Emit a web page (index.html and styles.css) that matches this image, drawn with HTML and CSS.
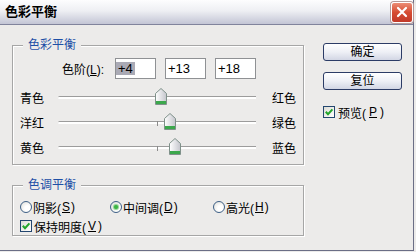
FILE: index.html
```
<!DOCTYPE html>
<html lang="zh-CN">
<head>
<meta charset="utf-8">
<title>色彩平衡</title>
<link rel="stylesheet" href="styles.css">
</head>
<body>
<div class="window">
  <div class="titlebar">
    <span class="title">色彩平衡</span>
    <button class="close" aria-label="关闭"><svg width="12" height="12" viewBox="0 0 12 12"><path d="M2 2L10 10M10 2L2 10" stroke="#fff" stroke-width="2.2" stroke-linecap="round"/></svg></button>
  </div>
  <div class="body">
    <div class="main">
      <fieldset class="group group-balance">
        <legend>色彩平衡</legend>
        <div class="levels">
          <span class="levels-label">色阶(<u>L</u>):</span>
          <div class="field"><span class="val sel">+4</span></div>
          <div class="field"><span class="val">+13</span></div>
          <div class="field"><span class="val">+18</span></div>
        </div>
        <div class="slider-row">
          <span class="s-left">青色</span>
          <div class="track"><span class="tick"></span><span class="thumb" style="left:52%"><svg width="12" height="17" viewBox="0 0 12 17"><defs><linearGradient id="tg" x1="0" x2="1"><stop offset="0" stop-color="#ffffff"/><stop offset="1" stop-color="#c4c5cc"/></linearGradient></defs><path d="M6 0.5L11.5 5.5V16.5H0.5V5.5Z" fill="url(#tg)" stroke="#7f918a"/><rect x="1" y="13" width="10" height="3" fill="#3ca84c"/></svg></span></div>
          <span class="s-right">红色</span>
        </div>
        <div class="slider-row">
          <span class="s-left">洋红</span>
          <div class="track"><span class="tick"></span><span class="thumb" style="left:56.5%"><svg width="12" height="17" viewBox="0 0 12 17"><path d="M6 0.5L11.5 5.5V16.5H0.5V5.5Z" fill="url(#tg)" stroke="#7f918a"/><rect x="1" y="13" width="10" height="3" fill="#3ca84c"/></svg></span></div>
          <span class="s-right">绿色</span>
        </div>
        <div class="slider-row">
          <span class="s-left">黄色</span>
          <div class="track"><span class="tick"></span><span class="thumb" style="left:59%"><svg width="12" height="17" viewBox="0 0 12 17"><path d="M6 0.5L11.5 5.5V16.5H0.5V5.5Z" fill="url(#tg)" stroke="#7f918a"/><rect x="1" y="13" width="10" height="3" fill="#3ca84c"/></svg></span></div>
          <span class="s-right">蓝色</span>
        </div>
      </fieldset>
      <fieldset class="group group-tone">
        <legend>色调平衡</legend>
        <div class="radios">
          <label class="radio-item w1"><span class="radio"></span>阴影(<u>S</u>)</label>
          <label class="radio-item w2"><span class="radio on"></span>中间调(<u>D</u>)</label>
          <label class="radio-item"><span class="radio"></span>高光(<u>H</u>)</label>
        </div>
        <label class="check check-tone"><span class="box"><svg width="10" height="10" viewBox="0 0 10 10"><path d="M1.8 4.8L4 7.2L8.4 2.4" fill="none" stroke="#22a52a" stroke-width="2"/></svg></span>保持明度(<u>V</u>)</label>
      </fieldset>
    </div>
    <div class="side">
      <button class="btn">确定</button>
      <button class="btn">复位</button>
      <label class="check check-preview"><span class="box"><svg width="10" height="10" viewBox="0 0 10 10"><path d="M1.8 4.8L4 7.2L8.4 2.4" fill="none" stroke="#22a52a" stroke-width="2"/></svg></span>预览(<u>P</u>)</label>
    </div>
  </div>
</div>
</body>
</html>
```
FILE: styles.css
```
html, body {
  margin: 0;
  background: #ecebea;
}
body {
  font-family: "Liberation Sans", "Noto Sans CJK SC", sans-serif;
  font-size: 12px;
  color: #000;
}
.window {
  width: 414px;
  height: 251px;
  box-sizing: border-box;
  border-right: 1px solid #6b6e86;
  border-bottom: 1px solid #6b6e86;
  background: #ecebea;
}
.titlebar {
  height: 25px;
  box-sizing: border-box;
  border-bottom: 1px solid #80839c;
  background: linear-gradient(#fdfdfe, #eeeff3 45%, #c3c5d5);
  display: flex;
  align-items: center;
  justify-content: space-between;
  padding-left: 5px;
}
.title {
  font-size: 13px;
  font-weight: bold;
  line-height: 16px;
}
.close {
  width: 22px;
  height: 21px;
  margin: 0;
  padding: 0;
  border: 1px solid #fff;
  border-radius: 3px;
  background: linear-gradient(#ec8c74, #d64c32 50%, #c13a2a);
  box-shadow: 0 0 0 1px #b79a98;
  display: flex;
  align-items: center;
  justify-content: center;
}
.body {
  display: flex;
  align-items: flex-start;
  padding-left: 12px;
}
.main {
  margin-top: 12px;
  width: 293px;
}
.group {
  margin: 0;
  padding: 0 0 4px 7px;
  width: 292px;
  box-sizing: border-box;
  border: 1px solid #a6a6a6;
  box-shadow: 1px 1px 0 #fff, inset 1px 1px 0 #fff;
  min-inline-size: 0;
}
.group legend {
  padding: 0 5px;
  margin-left: 3px;
  color: #1e4fa6;
  line-height: 16px;
  background: #ecebea;
}
.levels {
  display: flex;
  align-items: center;
  margin-top: 5px;
  padding-left: 42px;
  height: 21px;
}
.levels-label {
  width: 53px;
}
.field {
  width: 41px;
  height: 21px;
  box-sizing: border-box;
  border: 1px solid #8f9194;
  background: #fff;
  margin-right: 9px;
  display: flex;
  align-items: center;
  font-size: 13px;
}
.val {
  display: inline-block;
  line-height: 13px;
  padding: 0 2px;
}
.sel {
  background: #aaaab5;
}
.slider-row {
  display: flex;
  align-items: center;
  height: 25px;
}
.levels + .slider-row {
  margin-top: 6px;
}
.s-left {
  width: 38px;
}
.s-right {
  margin-left: 16px;
}
.track {
  position: relative;
  width: 198px;
  height: 2px;
  border-top: 1px solid #9c9c9c;
  background: #fff;
  border-radius: 2px 0 0 2px;
}
.tick {
  position: absolute;
  left: 50%;
  top: -1px;
  width: 1px;
  height: 5px;
  background: #8c8c8c;
}
.thumb {
  position: absolute;
  top: -9px;
  margin-left: -6px;
  width: 12px;
  height: 17px;
}
.thumb svg {
  display: block;
}
.group-tone {
  margin-top: 12px;
  padding-bottom: 1px;
}
.radios {
  display: flex;
  align-items: center;
  margin-top: 6px;
  height: 16px;
}
.radio-item {
  display: flex;
  align-items: center;
  gap: 1px;
}
.w1 { width: 90px; }
.w2 { width: 103px; }
.radio {
  width: 12px;
  height: 12px;
  box-sizing: border-box;
  border-radius: 50%;
  border: 1px solid #3d5f86;
  background: radial-gradient(circle at 65% 65%, #fff 30%, #dcdcd6 100%);
  display: flex;
  align-items: center;
  justify-content: center;
}
.radio.on::after {
  content: "";
  width: 4px;
  height: 4px;
  border-radius: 50%;
  background: #3cb544;
  box-shadow: 0 0 1px 1px #8ad08c;
}
.check {
  display: flex;
  align-items: center;
  gap: 2px;
  height: 16px;
}
.check-tone {
  margin-top: 3px;
}
.box {
  width: 12px;
  height: 12px;
  box-sizing: border-box;
  border: 1px solid #23466f;
  background: linear-gradient(135deg, #dcdcd5, #fff);
  display: flex;
  align-items: center;
  justify-content: center;
}
.box svg {
  display: block;
}
.side {
  margin-left: 18px;
  margin-top: 18px;
  width: 79px;
  display: flex;
  flex-direction: column;
  align-items: flex-start;
}
.btn {
  width: 79px;
  height: 18px;
  margin: 0;
  padding: 0;
  border: 1px solid #2c3c66;
  border-radius: 3px;
  background: linear-gradient(#ffffff, #eef0f6 50%, #d2d6e4);
  font: inherit;
  color: #000;
  line-height: 16px;
}
.btn + .btn {
  margin-top: 11px;
}
.check-preview {
  margin-top: 14px;
  gap: 3px;
}
```
